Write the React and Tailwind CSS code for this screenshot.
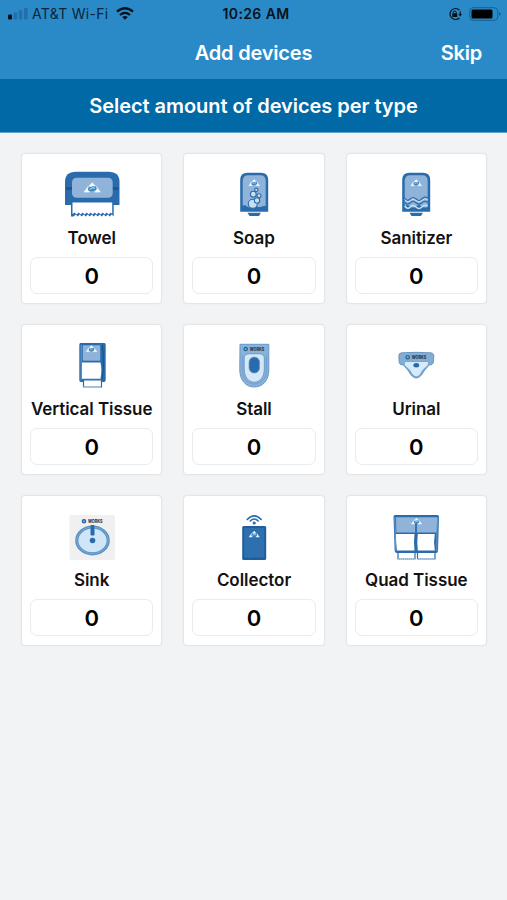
const INK = '#2a6cab'
const PANEL = '#8fb3d9'

function Mark({ x = 30, y = 16, s = 1 }) {
  return (
    <g transform={`translate(${x} ${y}) scale(${s})`}>
      <path d="M0 -5.200 3 -2 0 -.5 -3 -2ZM-4 -1.500 -8 4H-2.500L-4.500 1ZM4 -1.500 8 4H2.500L4.500 1Z" fill="#f4faff" stroke="#f4faff" strokeWidth=".6" strokeLinejoin="round" />
      <ellipse cy=".8" rx="4.300" ry="2.300" fill="#3c88bd" transform="rotate(-12)" />
      <path d="M-2.500 1.500Q0 -1.200 2.700 .2" fill="none" stroke="#d9eefa" strokeWidth=".9" />
    </g>
  )
}

// small round emblem with the brand name next to it
function Brand({ x, y, size = 4.6 }) {
  return (
    <g>
      <circle cx={x} cy={y} r="1.700" fill="#76addb" stroke="#1f629c" strokeWidth="1.200" />
      <text x={x + 4} y={y + 1.7} fontSize={size} fontWeight="800" textLength="14.500" lengthAdjust="spacingAndGlyphs" fill="#27394d" fontFamily="Inter, sans-serif">WORKS</text>
    </g>
  )
}

function Towel() {
  return (
    <>
      <path d="M3 35V12Q3 1.700 14 1.700H46.500Q57.500 1.700 57.500 12V35Z" fill={INK} />
      <path d="M4 17H10V20H4ZM50 17H56.500V20H50Z" fill="#1c5790" />
      <rect x="10" y="7.700" width="40.700" height="20" rx="4.500" fill={PANEL} />
      <Mark x={30.2} y={18} s={1.02} />
      <path d="M9 31.700H51.700V46.500L49.700 44.500 47.700 46.500 45.700 44.500 43.700 46.500 41.700 44.500 39.700 46.500 37.700 44.500 35.700 46.500 33.700 44.500 31.700 46.500 29.700 44.500 27.700 46.500 25.700 44.500 23.700 46.500 21.700 44.500 19.700 46.500 17.700 44.500 15.700 46.500 13.700 44.500 11.700 46.500 9 46.500Z" fill={INK} />
      <path d="M10.500 32.500H50.200V44L48.700 42.500 46.700 44.500 44.700 42.500 42.700 44.500 40.700 42.500 38.700 44.500 36.700 42.500 34.700 44.500 32.700 42.500 30.700 44.500 28.700 42.500 26.700 44.500 24.700 42.500 22.700 44.500 20.700 42.500 18.700 44.500 16.700 42.500 14.700 44.500 12.700 42.500 10.500 44Z" fill="#fff" />
    </>
  )
}

function Bottle({ children }) {
  return (
    <>
      <path d="M16.200 41.700V10Q16.200 2.700 23.500 2.700H37Q44.200 2.700 44.200 10V41.700Z" fill={INK} />
      <path d="M18.700 37.500V11Q18.700 5.200 24.200 5.200H36.200Q41.700 5.200 41.700 11V37.500Z" fill={PANEL} />
      <Mark x={30.2} y={13} s={0.68} />
      {children}
      <path d="M23.500 42.800H36.900L35 46H25.500Z" fill={INK} />
    </>
  )
}

function Soap() {
  return (
    <Bottle>
      <path d="M18 36Q21 34.500 23 36.500T28 37T33 36.500T38 36.500T42.500 36V40H18Z" fill={INK} />
      <g fill="#c9def0" stroke={INK} strokeWidth="1.100">
        <circle cx="32.300" cy="19.800" r="1.700" />
        <circle cx="29.300" cy="24.200" r="2.900" />
        <circle cx="35" cy="25.800" r="2" />
        <circle cx="28.800" cy="33.700" r="4.500" />
        <circle cx="33" cy="30.500" r="2.700" />
      </g>
    </Bottle>
  )
}

function Sanitizer() {
  return (
    <Bottle>
      <path d="M18.500 36.500Q20.500 33.500 24 36.500T30 36.500T36 36.500T42 36.500V40H18.500Z" fill={INK} />
      <g fill="none">
        <path d="M18.700 28Q21.500 32 24.300 29T30 29T35.800 29T41.700 28" stroke={INK} strokeWidth="1.200" />
        <path d="M18.700 29.500Q21.500 33.500 24.300 30.500T30 30.500T35.800 30.500T41.700 29.500" stroke="#d1e3f2" strokeWidth="1" />
        <path d="M18.700 32.500Q21.500 35.500 24.300 32.800T30 32.800T35.800 32.800T41.700 32.500" stroke={INK} strokeWidth="1.200" />
        <path d="M18.700 36Q21.500 40 24.300 37T30 37T35.800 37T41.700 36" stroke="#c8e1f5" strokeWidth="1.500" />
      </g>
    </Bottle>
  )
}

function VerticalTissue() {
  return (
    <>
      <path d="M18.500 2H42.500Q43.700 2 43.700 4V39Q43.700 41 42 41H19Q17.300 41 17.300 39V4Q17.300 2 18.500 2Z" fill={INK} />
      <path d="M19.200 4V39" stroke="#8ab1d5" strokeWidth=".7" />
      <path d="M40.200 4Q42.700 20 40.200 39" fill="none" stroke="#17568f" strokeWidth="1.200" />
      <rect x="20.800" y="4.300" width="17.400" height="15.400" fill={PANEL} />
      <Mark x={29.5} y={8} s={0.68} />
      <path d="M20 21.500H38.500Q40.300 29 38.500 37.700H20Z" fill="#fff" />
      <path d="M21.500 38.800H39.500V46H21.500Z" fill="#fff" stroke={INK} strokeWidth="1.200" />
      <path d="M21.500 46H39.500" stroke="#fff" strokeWidth="1.200" strokeDasharray=".7 1.300" />
    </>
  )
}

function Stall() {
  return (
    <>
      <path d="M16 3.300H44.800V29C44.800 39 39 46 30.300 46S15.800 39 15.800 29Z" fill="#8ab2d9" stroke="#6798c6" strokeWidth="1" />
      <path d="M18.300 14V29C18.300 37 23.500 43 30.300 43S42.500 37 42.500 29V14" fill="none" stroke="#6b9bc9" strokeWidth=".8" />
      <path d="M20.200 17Q20.200 13.300 25 12.800H35.500Q40.300 13.300 40.300 17V28C40.300 36 36 41.200 30.300 41.200S20.200 36 20.200 28Z" fill="#d4e8f9" stroke="#5a8fbf" strokeWidth=".8" />
      <rect x="25" y="16" width="10.600" height="16" rx="5.200" fill={INK} stroke="#6f9bc4" strokeWidth=".7" />
      <Brand x={21.7} y={8} />
    </>
  )
}

function Urinal() {
  return (
    <>
      <path d="M15.500 11.800Q30 10.800 45 11.800Q48.500 12.500 47.800 16L47.300 22Q46.500 24.200 43 24L38 30Q34.500 37 30.300 37T22.500 30L17.500 24Q13.500 24.200 13.200 21.500L12.800 15Q12.700 12 15.500 11.800Z" fill="#83add4" stroke="#5589b8" strokeWidth=".8" />
      <path d="M18.500 20.500H42.500L42.300 24L36.500 29.500Q33.800 35.700 30.300 35.700T24 29.500L18.200 24Z" fill="#d5eafb" stroke="#6499c9" strokeWidth=".7" />
      <ellipse cx="30.300" cy="24.200" rx="2.900" ry="2.200" fill={INK} />
      <Brand x={21.7} y={16.2} />
    </>
  )
}

function Sink() {
  return (
    <>
      <rect x="7.500" y="3" width="45.500" height="45" rx="2" fill="#f0f0f1" />
      <ellipse cx="30.500" cy="28.400" rx="15.700" ry="13.400" fill="#cfe5f8" stroke="#5b92c2" strokeWidth="3.200" />
      <ellipse cx="30.500" cy="28.400" rx="15.700" ry="13.400" fill="none" stroke="#80add4" strokeWidth=".8" />
      <rect x="28.500" y="13" width="4" height="10.500" rx="1" fill={INK} />
      <circle cx="30.500" cy="28.500" r="2.800" fill={INK} />
      <Brand x={22} y={9.3} size={4.4} />
    </>
  )
}

function Collector() {
  return (
    <>
      <rect x="18.200" y="14" width="24" height="34" rx="1.500" fill="#215d9a" />
      <rect x="20.200" y="16" width="20" height="29.500" fill="#2d70ad" />
      <Mark x={30.2} y={22.5} s={0.65} />
      <path d="M24 45.500h3.500" stroke="#0876dd" strokeWidth="1.400" />
      <g fill="none" stroke={INK} strokeWidth="1.600" strokeLinecap="round">
        <path d="M23.200 7.500Q30.200 .3 37.200 7.500" />
        <path d="M26.200 9Q30.200 5 34.200 9" />
      </g>
      <circle cx="30.200" cy="11" r="1.600" fill={INK} />
    </>
  )
}

function QuadTissue() {
  return (
    <>
      <path d="M9 3H51.500Q53 3 53 5L52 39Q52 41 50 41H11Q9 41 8.700 39L7.500 5Q7.500 3 9 3Z" fill={INK} />
      <path d="M10 5.200H51.200L50.500 20.500H10.300Z" fill={PANEL} />
      <path d="M8.800 5Q9 22 10 39M51.800 5Q50.500 22 50.800 39" fill="none" stroke="#91b5d8" strokeWidth=".6" />
      <path d="M30 10V21.500" stroke={INK} strokeWidth="1.800" />
      <Mark x={30.5} y={9.5} s={0.65} />
      <path d="M10 22H28.500Q27.500 29 28.500 38.500H11Q9.800 30 10 22ZM31.800 22H48.800Q47.300 30 48.800 38.500H31.800Q30.800 29 31.800 22Z" fill="#fff" />
      <path d="M12 40.500H29V47H12ZM31.500 40.500H49V47H31.500Z" fill="#fff" stroke={INK} strokeWidth="1.200" />
      <path d="M12 47H29M31.500 47H49" stroke="#fff" strokeWidth="1.200" strokeDasharray=".7 1.300" />
    </>
  )
}

const DEVICES = [
  { name: 'Towel', Icon: Towel, count: 0 },
  { name: 'Soap', Icon: Soap, count: 0 },
  { name: 'Sanitizer', Icon: Sanitizer, count: 0 },
  { name: 'Vertical Tissue', Icon: VerticalTissue, count: 0 },
  { name: 'Stall', Icon: Stall, count: 0 },
  { name: 'Urinal', Icon: Urinal, count: 0 },
  { name: 'Sink', Icon: Sink, count: 0 },
  { name: 'Collector', Icon: Collector, count: 0 },
  { name: 'Quad Tissue', Icon: QuadTissue, count: 0 },
]

function DeviceCard({ name, Icon, count }) {
  return (
    <div className="flex h-[151px] flex-col items-center rounded-[4px] border border-[#e3e6e9] bg-white px-2 pt-4 shadow-[0_0_2px_rgba(0,0,0,0.05)]">
      <svg viewBox="0 0 60 49" className="h-[49px] w-[60px] shrink-0">
        <Icon />
      </svg>
      <p className="mt-[7px] text-[17px] leading-6 font-semibold tracking-[-0.05px] whitespace-nowrap text-[#121212]">{name}</p>
      <div className="mt-[7px] flex h-[37px] w-full items-center justify-center rounded-[7px] border border-[#eaebec] pt-px text-[22px] font-semibold text-black">
        {count}
      </div>
    </div>
  )
}

function StatusBar() {
  return (
    <div className="grid h-[27px] grid-cols-3 items-center pr-[6px] pl-2 text-[14px] text-[#0b2438]">
      <div className="flex items-center whitespace-nowrap">
        <svg viewBox="0 0 20 13" className="mr-1 h-[13px] w-5">
          <rect x="0" y="7.500" width="4" height="5" rx="1" fill="#06111b" />
          <rect x="5.500" y="5.500" width="3.700" height="7" rx="1" fill="#2370a8" />
          <rect x="10.700" y="3.200" width="3.700" height="9.300" rx="1" fill="#2370a8" />
          <rect x="16" y=".8" width="3.700" height="11.700" rx="1" fill="#2370a8" />
        </svg>
        <span className="tracking-[0.3px]">AT&amp;T Wi-Fi</span>
        <svg viewBox="0 0 18 13" className="ml-[7px] h-[13px] w-[18px]">
          <g fill="none" stroke="#06111b" strokeWidth="2.200">
            <path d="M1 4.700Q9 -2.200 17 4.700" />
            <path d="M4 8Q9 3.700 14 8" />
          </g>
          <path d="M6.200 10Q9 7.800 11.800 10L9 12.800Z" fill="#06111b" />
        </svg>
      </div>
      <p className="pl-[3px] text-center font-semibold tracking-[0.4px] text-[#06111b]">10:26 AM</p>
      <div className="flex items-center justify-end">
        <svg viewBox="0 0 14 14" className="mr-[7px] size-[14px]">
          <path d="M11.500 3.200A5.500 5.500 0 1 0 11.500 10.800" fill="none" stroke="#06111b" strokeWidth="1.200" />
          <path d="M12.300 4.500V7.500" stroke="#06111b" strokeWidth="1.200" />
          <path d="M10.300 7H14L12.200 9.500Z" fill="#06111b" />
          <rect x="4.200" y="6.200" width="5" height="3.800" rx=".5" fill="#06111b" />
          <path d="M5.200 6.500V5.300Q5.200 4 6.700 4T8.200 5.300V6.500" fill="none" stroke="#06111b" />
        </svg>
        <svg viewBox="0 0 32 14" className="h-[14px] w-8">
          <rect x=".7" y=".7" width="28" height="12.600" rx="3.500" fill="none" stroke="#1a5e92" />
          <rect x="2.500" y="2.500" width="21" height="9" rx="1.500" fill="#000" />
          <path d="M30 5Q31.800 6 31.800 7T30 9Z" fill="#1a5e92" />
        </svg>
      </div>
    </div>
  )
}

export default function App() {
  return (
    <div className="h-[900px] w-[507px] overflow-hidden bg-[#f1f3f5] font-['Inter','Liberation_Sans',sans-serif]">
      <header className="h-[79px] bg-[#2a8ac8]">
        <StatusBar />
        <div className="grid h-[51px] grid-cols-[1fr_auto_1fr] items-center px-[25px] text-[20px] font-semibold tracking-[-0.2px] text-white">
          <span />
          <h1>Add devices</h1>
          <button className="justify-self-end">Skip</button>
        </div>
      </header>
      <h2 className="flex h-[54px] items-center justify-center border-b border-[#5f9fc9] bg-[#0069a6] pt-px text-[20px] font-semibold tracking-[-0.05px] text-white">
        Select amount of devices per type
      </h2>
      <main className="grid grid-cols-3 gap-x-[21px] gap-y-5 pt-5 pr-5 pl-[21px]">
        {DEVICES.map((d) => <DeviceCard key={d.name} {...d} />)}
      </main>
    </div>
  )
}
